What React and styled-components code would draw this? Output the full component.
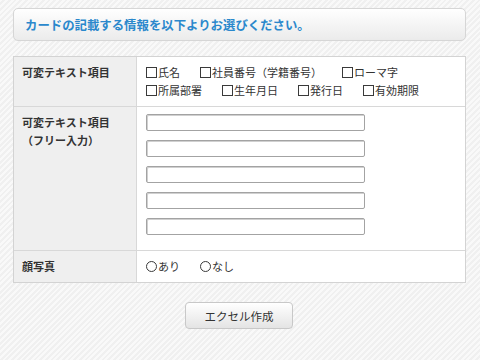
import React from "react";
import styled, { createGlobalStyle } from "styled-components";

const Global = createGlobalStyle`
  html, body { margin: 0; padding: 0; }
  body {
    width: 480px;
    height: 360px;
    overflow: hidden;
    font-family: "Noto Sans CJK JP", "Noto Sans", sans-serif;
    color: #333;
    background: repeating-linear-gradient(135deg, #f9f9f9 0 2px, #f0f0f0 2px 4px);
  }
`;

const Page = styled.div`
  width: 453px;
  margin-left: 13px;
  padding-top: 8px;
  display: flex;
  flex-direction: column;
`;

const Heading = styled.div`
  box-sizing: border-box;
  height: 33px;
  display: flex;
  align-items: center;
  padding-left: 11px;
  border: 1px solid #d6d6d6;
  border-radius: 5px;
  background: linear-gradient(#ffffff, #ebebeb);
  box-shadow: 0 0 1px rgba(0,0,0,0.06);
  color: #2a88cc;
  font-weight: bold;
  font-size: 12.4px;
`;

const Table = styled.div`
  margin-top: 15px;
  border: 1px solid #d3d3d3;
  background: #fff;
`;

const Row = styled.div`
  display: grid;
  grid-template-columns: 123px 1fr;
  border-top: ${(p) => (p.$first ? "none" : "1px solid #d8d8d8")};
`;

const Label = styled.div`
  box-sizing: border-box;
  background: #efefef;
  border-right: 1px solid #d8d8d8;
  padding: 6px 8px;
  font-size: 11px;
  font-weight: bold;
  line-height: 18px;
  color: #333;
`;

const Cell = styled.div`
  padding: ${(p) => p.$pad || "6px 9px 7px"};
  font-size: 11px;
  line-height: 18px;
  color: #333;
  display: flex;
  flex-direction: column;
  gap: ${(p) => p.$gap || "0px"};
`;

const Line = styled.div`
  display: flex;
  align-items: center;
  column-gap: 20px;
`;

const Option = styled.span`
  display: inline-flex;
  align-items: center;
`;

const Box = styled.span`
  box-sizing: border-box;
  width: 11px;
  height: 11px;
  margin-right: 1px;
  border: 1px solid #3a3a3a;
  background: #fff;
`;

const Circle = styled.span`
  box-sizing: border-box;
  width: 11px;
  height: 11px;
  margin-right: 1px;
  border: 1px solid #3a3a3a;
  border-radius: 50%;
  background: #fff;
`;

const TextInput = styled.input`
  box-sizing: border-box;
  width: 219px;
  height: 17px;
  margin: 0;
  border: 1px solid #a3a3a3;
  border-radius: 2px;
  box-shadow: inset 1px 1px 0 #d0d0d0;
  background: #fff;
  outline: none;
`;

const ButtonRow = styled.div`
  display: flex;
  justify-content: center;
  margin-top: 19px;
`;

const Button = styled.button`
  box-sizing: border-box;
  width: 108px;
  height: 27px;
  margin-left: -1px;
  border: 1px solid #c8c8c8;
  border-radius: 4px;
  background: linear-gradient(#ffffff, #e4e4e4);
  font-family: "Noto Sans CJK JP", sans-serif;
  font-size: 11.5px;
  color: #333;
  padding: 0;
  cursor: pointer;
`;

const Check = ({ children }) => (
  <Option>
    <Box />
    {children}
  </Option>
);

const Radio = ({ children }) => (
  <Option>
    <Circle />
    {children}
  </Option>
);

export default function App() {
  return (
    <>
      <Global />
      <Page>
        <Heading>カードの記載する情報を以下よりお選びください。</Heading>
        <Table>
          <Row $first>
            <Label>可変テキスト項目</Label>
            <Cell>
              <Line>
                <Check>氏名</Check>
                <Check>社員番号（学籍番号）</Check>
                <Check>ローマ字</Check>
              </Line>
              <Line>
                <Check>所属部署</Check>
                <Check>生年月日</Check>
                <Check>発行日</Check>
                <Check>有効期限</Check>
              </Line>
            </Cell>
          </Row>
          <Row>
            <Label>
              可変テキスト項目
              <br />
              （フリー入力）
            </Label>
            <Cell $pad="7px 9px 15px" $gap="9px">
              {[0, 1, 2, 3, 4].map((i) => (
                <TextInput key={i} type="text" />
              ))}
            </Cell>
          </Row>
          <Row>
            <Label>顔写真</Label>
            <Cell>
              <Line>
                <Radio>あり</Radio>
                <Radio>なし</Radio>
              </Line>
            </Cell>
          </Row>
        </Table>
        <ButtonRow>
          <Button>エクセル作成</Button>
        </ButtonRow>
      </Page>
    </>
  );
}
